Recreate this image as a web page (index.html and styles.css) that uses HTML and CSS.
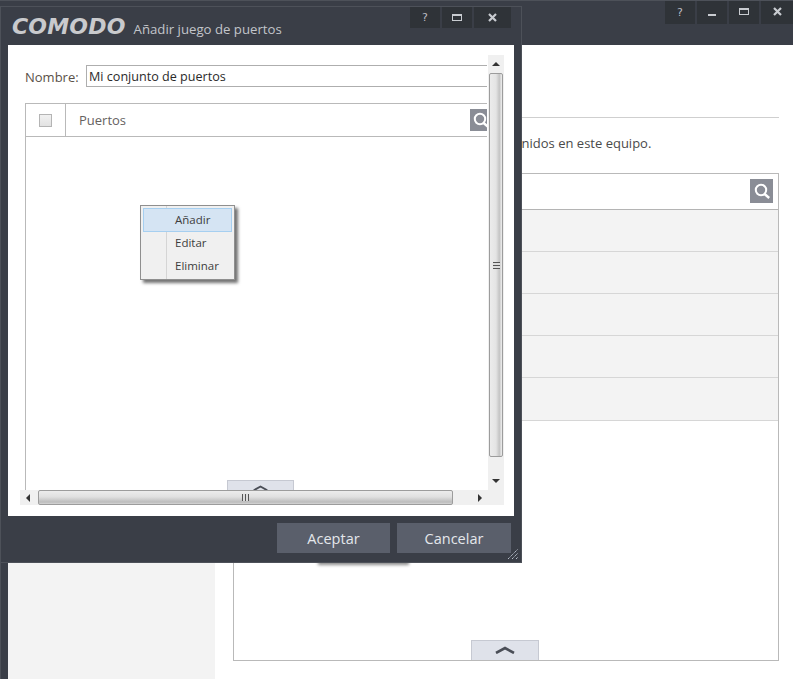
FILE: index.html
```html
<!DOCTYPE html>
<html lang="es">
<head>
<meta charset="utf-8">
<title>COMODO</title>
<link rel="stylesheet" href="styles.css">
</head>
<body>
<svg class="defs" width="0" height="0">
  <defs>
    <symbol id="ico-search" viewBox="0 0 22 22">
      <circle cx="10" cy="10" r="5.2" fill="none" stroke="#fff" stroke-width="2"/>
      <path d="M13.6 14l4.6 4" fill="none" stroke="#fff" stroke-width="2.4"/>
    </symbol>
    <symbol id="ico-close" viewBox="0 0 9 9">
      <path d="M1 1l7 7M8 1l-7 7" fill="none" stroke="#c9ccd1" stroke-width="2.2"/>
    </symbol>
    <symbol id="ico-chev" viewBox="0 0 20 8">
      <path d="M1 7l9-5 9 5" fill="none" stroke="#4a4e57" stroke-width="2.6"/>
    </symbol>
  </defs>
</svg>

<div class="app">
  <header class="app-bar">
    <div class="win-btns">
      <button class="win-btn w30"><span class="q">?</span></button>
      <button class="win-btn w30"><i class="ic-min"></i></button>
      <button class="win-btn w30"><i class="ic-max up"></i></button>
      <button class="win-btn w32"><svg class="ic-x up" width="9" height="9"><use href="#ico-close"/></svg></button>
    </div>
  </header>
  <div class="app-body">
    <aside class="sidebar"></aside>
    <main class="content">
      <div class="rule"></div>
      <p class="intro">Los juegos de puertos muestra los puertos definidos en este equipo.</p>
      <section class="box">
        <div class="box-head">
          <span class="search-btn main-search"><svg width="22" height="22"><use href="#ico-search"/></svg></span>
        </div>
        <div class="row"></div>
        <div class="row"></div>
        <div class="row"></div>
        <div class="row"></div>
        <div class="row row-last"></div>
        <div class="tab main-tab"><svg width="20" height="8"><use href="#ico-chev"/></svg></div>
      </section>
    </main>
    <div class="hidden-btn"></div>
  </div>
</div>

<div class="dialog">
  <header class="dlg-bar">
    <div class="brand">
      <span class="logo">COMODO</span>
      <span class="dlg-title">Añadir juego de puertos</span>
    </div>
    <div class="dlg-btns">
      <button class="win-btn w30"><span class="q">?</span></button>
      <button class="win-btn w30"><i class="ic-max"></i></button>
      <button class="win-btn w37"><svg class="ic-x" width="9" height="9"><use href="#ico-close"/></svg></button>
    </div>
  </header>
  <div class="dlg-body">
    <div class="scroll-grid">
      <div class="pane">
        <div class="name-row">
          <label class="name-label">Nombre:</label>
          <div class="name-input">Mi conjunto de puertos</div>
        </div>
        <div class="ports">
          <div class="ports-head">
            <div class="check-col"><span class="check"></span></div>
            <div class="ports-title">Puertos</div>
            <span class="search-btn dlg-search"><svg width="22" height="22"><use href="#ico-search"/></svg></span>
          </div>
          <div class="tab dlg-tab"><svg width="15" height="6"><use href="#ico-chev"/></svg></div>
        </div>
      </div>
      <div class="vbar">
        <div class="sb-cap"><i class="tri tri-up"></i></div>
        <div class="vthumb"><i class="grip-h"></i></div>
        <div class="sb-cap low"><i class="tri tri-down"></i></div>
      </div>
      <div class="hbar">
        <div class="sb-capx"><i class="tri tri-left"></i></div>
        <div class="hthumb"><i class="grip-v"></i></div>
        <div class="sb-capx right"><i class="tri tri-right"></i></div>
      </div>
      <div class="corner"></div>
    </div>
  </div>
  <footer class="dlg-foot">
    <button class="action a-ok">Aceptar</button>
    <button class="action a-cancel">Cancelar</button>
    <svg class="resize" width="12" height="12" viewBox="0 0 12 12">
      <path d="M1 11l10-10M5 11l6-6M9 11l2-2" stroke="#b9c0cc" stroke-width="1" stroke-dasharray="1.4 .6" fill="none"/>
    </svg>
  </footer>
</div>

<ul class="menu">
  <li class="menu-item active">Añadir</li>
  <li class="menu-item">Editar</li>
  <li class="menu-item">Eliminar</li>
</ul>
</body>
</html>
```

FILE: styles.css
```css
* { box-sizing: border-box; }
html, body { margin: 0; padding: 0; }
body {
  position: relative;
  width: 793px;
  height: 679px;
  overflow: hidden;
  background: #fff;
  font-family: "Open Sans", "Noto Sans", sans-serif;
  color: #444;
}
.defs { position: absolute; }

/* background window */
.app { display: flex; flex-direction: column; width: 793px; height: 679px; }
.app-bar {
  flex: 0 0 45px;
  display: flex;
  justify-content: flex-end;
  align-items: flex-start;
  background: #3a3e47;
  border-top: 1px solid #4d5159;
}
.win-btns { display: flex; gap: 2px; }
.win-btns .win-btn { height: 23px; }
.win-btn {
  display: flex;
  align-items: center;
  justify-content: center;
  height: 21px;
  padding: 0;
  border: 0;
  background: #2f3338;
  color: #c9ccd1;
}
.w30 { width: 30px; }
.w32 { width: 32px; }
.w37 { width: 37px; }
.q { font: normal 11px "DejaVu Sans", sans-serif; color: #b9bcc2; }
.ic-min { display: block; width: 8px; height: 2px; background: #c9ccd1; margin-top: 5px; }
.ic-max { display: block; width: 10px; height: 7px; border: 1px solid #c9ccd1; border-top-width: 2px; }
.ic-max.up, .ic-x.up { margin-bottom: 2px; }

.app-body { position: relative; flex: 1; display: flex; border-left: 1px solid #4d5159; }
.sidebar {
  flex: 0 0 207px;
  margin-left: 7px;
  background: #f3f3f3;
  box-shadow: -7px 0 0 #3a3e47;
}
.content { flex: 1; display: flex; flex-direction: column; padding: 72px 14px 0 18px; }
.rule { height: 1px; background: #cfcfcf; }
.intro {
  margin: 15px 0 20px;
  height: 20px;
  padding-left: 4px;
  font-size: 13px;
  line-height: 20px;
  color: #4a4a4a;
  white-space: nowrap;
}
.box { position: relative; height: 488px; border: 1px solid #b9b9b9; }
.box-head {
  display: flex;
  justify-content: flex-end;
  height: 36px;
  padding: 5px 5px 0 0;
  border-bottom: 1px solid #b4b4b4;
}
.row { height: 42px; background: #f3f3f3; border-bottom: 1px solid #d6d6d6; }
.row-last { height: 43px; }
.search-btn { display: flex; align-items: center; justify-content: center; background: #8a8d96; }
.search-btn svg { flex: none; }
.main-search { width: 23px; height: 24px; }
.tab {
  position: absolute;
  display: flex;
  justify-content: center;
  background: #dfe2ea;
  border: 1px solid #c6c9d2;
  border-bottom: 0;
}
.main-tab { right: 239px; bottom: 0; width: 68px; height: 20px; padding-top: 5px; }
.hidden-btn {
  position: absolute;
  left: 317px;
  top: 480px;
  width: 91px;
  height: 38px;
  box-shadow: 0 2px 3px rgba(0,0,0,.45);
}

/* dialog */
.dialog {
  position: absolute;
  left: 0;
  top: 6px;
  width: 522px;
  height: 557px;
  display: flex;
  flex-direction: column;
  background: #3a3e47;
  border: 1px solid #4d5159;
}
.dlg-bar { position: relative; flex: 0 0 38px; display: flex; justify-content: space-between; }
.brand { display: flex; align-items: baseline; padding: 7px 0 0 11px; gap: 8px; }
.logo {
  font: italic bold 22px/26px "DejaVu Sans", sans-serif;
  letter-spacing: .2px;
  color: #c9cacd;
}
.dlg-title { font-size: 13.2px; line-height: 26px; color: #c2c5ca; }
.dlg-btns { display: flex; gap: 2px; margin-right: 10px; }

.dlg-body { flex: 0 0 471px; margin: 0 7px; background: #fff; padding: 10px 0 0 12px; }
.scroll-grid { display: grid; grid-template-columns: 468px 16px; grid-template-rows: 435px 15px; width: 484px; }
.pane { display: flex; flex-direction: column; padding: 10px 1px 0 5px; overflow: hidden; }
.name-row { display: flex; align-items: stretch; height: 22px; }
.name-label { width: 61px; font-size: 13px; line-height: 24px; color: #5a5048; }
.name-input {
  flex: 1;
  border: 1px solid #aeaeae;
  border-right: 0;
  padding-left: 2px;
  font-size: 12.6px;
  line-height: 22px;
  color: #2a2a2a;
}
.ports {
  position: relative;
  flex: 1;
  margin-top: 16px;
  border-left: 1px solid #b9b9b9;
  border-top: 1px solid #b9b9b9;
}
.ports-head { display: flex; align-items: center; height: 33px; border-bottom: 1px solid #b9b9b9; }
.check-col {
  flex: 0 0 40px;
  align-self: stretch;
  display: flex;
  align-items: center;
  justify-content: center;
  border-right: 1px solid #b9b9b9;
}
.check {
  width: 13px;
  height: 13px;
  border: 1px solid #b4b4b4;
  background: linear-gradient(#f1f1f1, #e2e2e2);
}
.ports-title { flex: 1; padding-left: 13px; font-size: 13px; color: #66625f; }
.dlg-search { flex: none; width: 17px; height: 22px; overflow: hidden; justify-content: flex-start; }
.dlg-tab { left: 201px; bottom: 0; width: 67px; height: 10px; padding-top: 4px; overflow: hidden; }

.vbar { display: flex; flex-direction: column; background: #f0f0f0; }
.sb-cap { flex: 0 0 18px; display: flex; align-items: center; justify-content: center; }
.sb-cap.low { flex-basis: 33px; margin-top: auto; padding-top: 15px; }
.vthumb {
  flex: 1;
  display: flex;
  align-items: center;
  justify-content: center;
  margin: 0 1px;
  border: 1px solid #9c9c9c;
  border-radius: 2px;
  background: linear-gradient(90deg, #ececec, #e4e4e4 50%, #c4c4c4 78%, #efefef);
}
.grip-h {
  display: block;
  width: 7px;
  height: 7px;
  background: repeating-linear-gradient(#555 0 1px, #ddd 1px 3px);
}
.hbar { display: flex; background: #f0f0f0; }
.sb-capx { flex: 0 0 18px; display: flex; align-items: center; justify-content: center; padding-right: 3px; }
.sb-capx.right { flex-basis: 35px; padding: 0 0 0 19px; }
.hthumb {
  flex: 1;
  display: flex;
  align-items: center;
  justify-content: center;
  border: 1px solid #9c9c9c;
  border-radius: 2px;
  background: linear-gradient(#ececec, #e0e0e0 45%, #bcbcbc 85%, #d5d5d5);
}
.grip-v {
  display: block;
  width: 7px;
  height: 7px;
  background: repeating-linear-gradient(90deg, #555 0 1px, #ddd 1px 3px);
}
.corner { background: #f0f0f0; }
.tri { display: block; width: 0; height: 0; border: 4px solid transparent; }
.tri-up { border-top: 0; border-bottom: 4px solid #333; }
.tri-down { border-bottom: 0; border-top: 4px solid #333; }
.tri-left { border-left: 0; border-right: 4px solid #333; }
.tri-right { border-right: 0; border-left: 4px solid #333; }

.dlg-foot {
  position: relative;
  flex: 1;
  display: flex;
  justify-content: flex-end;
  gap: 7px;
  padding: 7px 10px 0 0;
}
.action {
  height: 30px;
  padding: 0;
  border: 0;
  background: #5a5f6b;
  font-family: "Open Sans", "Noto Sans", sans-serif;
  font-size: 14.5px;
  color: #e4e7ec;
}
.a-ok { width: 113px; }
.a-cancel { width: 114px; }
.resize { position: absolute; right: 2px; bottom: 2px; }

/* context menu */
.menu {
  position: absolute;
  left: 140px;
  top: 205px;
  width: 95px;
  height: 75px;
  margin: 0;
  padding: 2px;
  list-style: none;
  background: linear-gradient(90deg, #f0f0f0 25px, #d5d5d5 25px 26px, #f0f0f0 26px);
  border: 1px solid #8f8f8f;
  box-shadow: 3px 3px 3px rgba(0,0,0,.55);
}
.menu-item {
  height: 23.5px;
  padding-left: 31px;
  border: 1px solid transparent;
  font-size: 11.5px;
  line-height: 20px;
  color: #3d3d3d;
}
.menu-item.active { line-height: 21px; background: #d5e4f3; border-color: #a6cff0; }
```
